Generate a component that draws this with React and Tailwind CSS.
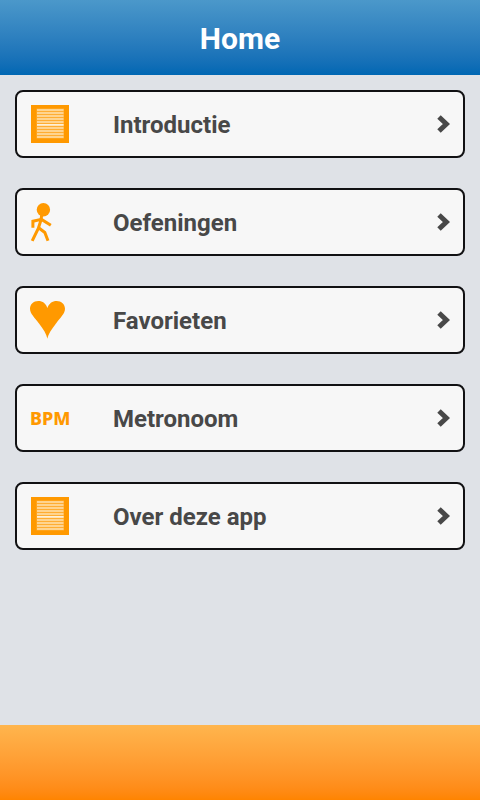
const items = [
  { name: "Introductie", href: "#introductie", icon: PageIcon },
  { name: "Oefeningen", href: "#oefeningen", icon: WalkIcon },
  { name: "Favorieten", href: "#favorieten", icon: HeartIcon },
  { name: "Metronoom", href: "#metronoom", icon: BpmIcon },
  { name: "Over deze app", href: "#over", icon: PageIcon },
];

function PageIcon() {
  return (
    <svg viewBox="0 0 40 40" className="size-10" aria-hidden="true">
      <rect x="1" y="1" width="38" height="38" fill="#ff9900" />
      <rect x="6.5" y="4.5" width="27.5" height="30" fill="#ffad33" />
      {[5, 8, 11, 14, 17, 20, 23, 26, 29, 32].map((y) => (
        <rect key={y} x="7" y={y} width="26.5" height="2" fill="#ffd48f" />
      ))}
      <rect x="7" y="20" width="26.5" height="1.5" fill="#fff0d6" />
    </svg>
  );
}

function WalkIcon() {
  return (
    <svg viewBox="0 0 40 40" className="size-10" aria-hidden="true">
      <circle cx="13.4" cy="7.7" r="6.7" fill="#ff9900" />
      <g fill="none" stroke="#ff9900" strokeWidth="3">
        <path d="M11.7 13 11 18 8.3 26.5 2.2 38.8" />
        <path d="M8.3 25.5 14.8 30.5 18 38.8" />
        <path d="M2.9 25.8V19.2L11.5 17.4 20.8 23.2" />
      </g>
    </svg>
  );
}

function HeartIcon() {
  return (
    <svg viewBox="0 0 40 40" className="size-10" aria-hidden="true">
      <path
        d="M17.4 38.8C16.5 34 13.5 29.5 9 23.5 4.5 17.5 0 13.5 0 8.8 0 4 3.6.9 8.2.9c4.5 0 7.8 2.6 9.2 7.1C18.8 3.5 22.3.9 26.6.9 31.4.9 35 4 35 8.8c0 4.7-4.5 8.7-9 14.7-4.5 6-7.7 10.5-8.6 15.3Z"
        fill="#ff9900"
      />
    </svg>
  );
}

function BpmIcon() {
  return (
    <span className="font-['Noto_Sans',sans-serif] text-lg font-extrabold text-[#ff9900]">
      BPM
    </span>
  );
}

function Chevron() {
  return (
    <svg viewBox="0 0 14 20" className="h-5 w-3.5" aria-hidden="true">
      <path d="M3 3 10.4 10 3 17" fill="none" stroke="#484848" strokeWidth="5" />
    </svg>
  );
}

function App() {
  return (
    <div className="flex min-h-screen flex-col bg-[#dfe2e7] font-[Roboto,sans-serif]">
      <header className="flex h-[75px] items-center justify-center bg-linear-to-b from-[#4b98ca] to-[#0067b3] pt-0.5">
        <h1 className="text-3xl font-bold text-white">Home</h1>
      </header>

      <main className="flex-1 p-[15px]">
        <nav className="flex flex-col gap-[30px]">
          {items.map((item) => (
            <a
              key={item.name}
              href={item.href}
              className="flex h-[68px] items-center rounded-lg border-2 border-[#111113] bg-[#f7f7f7] px-[13px]"
            >
              <span className="flex w-[83px] shrink-0 items-center">
                <item.icon />
              </span>
              <span className="flex-1 pt-0.5 text-2xl font-bold text-[#484848]">{item.name}</span>
              <Chevron />
            </a>
          ))}
        </nav>
      </main>

      <footer className="h-[75px] bg-linear-to-b from-[#ffb54d] to-[#ff8400]" />
    </div>
  );
}

export default App;
